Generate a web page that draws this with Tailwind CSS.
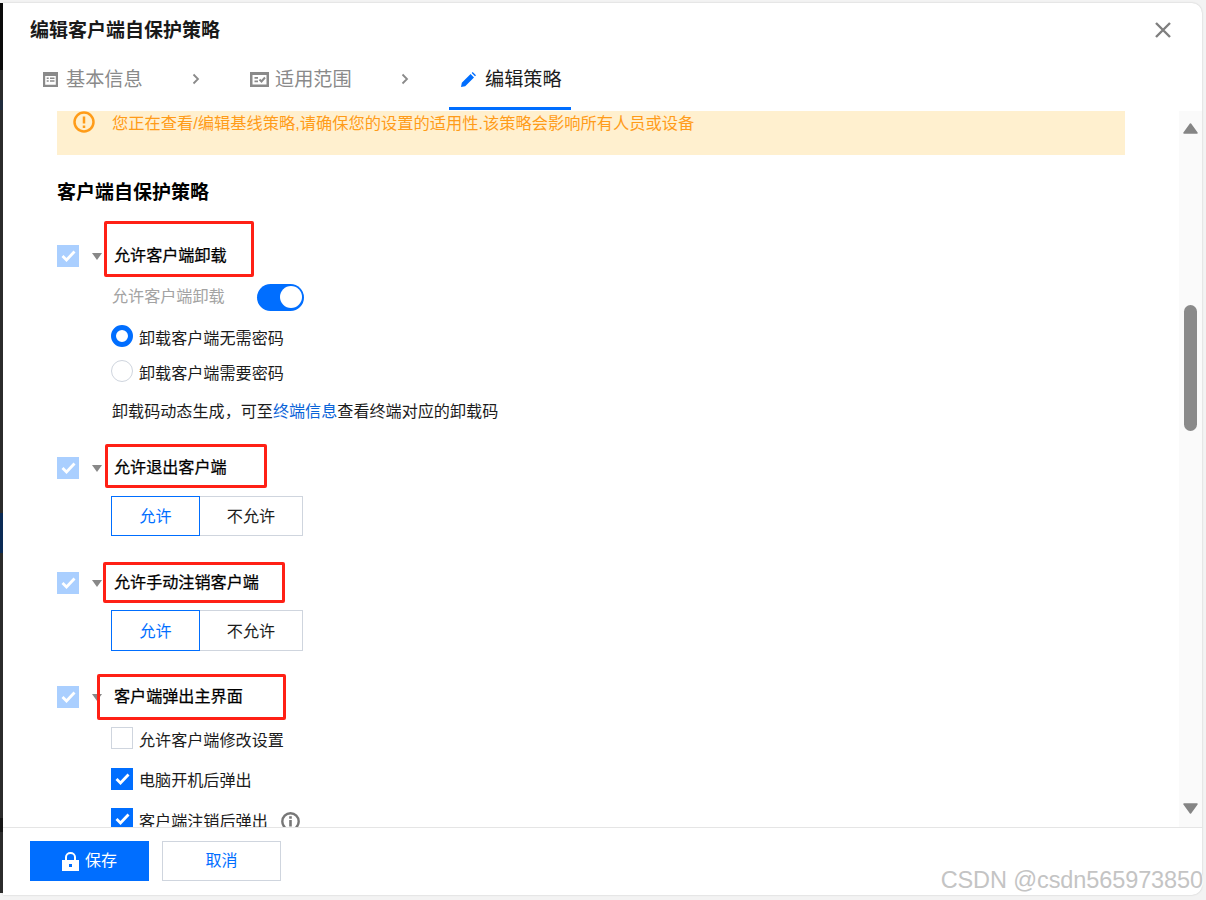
<!DOCTYPE html>
<html>
  <head>
    <meta charset="UTF-8" />
    <script src="https://cdn.jsdelivr.net/npm/@tailwindcss/browser@4"></script>
    <title>编辑客户端自保护策略</title>
  </head>
  <body class="[font-family:'Liberation_Sans','Noto_Sans_CJK_SC',sans-serif]">
    <div class="relative w-[1206px] h-[900px] overflow-hidden bg-[#f3f3f3] pt-[3px] pl-[3px]">
      <!-- dark window behind the dialog, only its edge shows -->
      <div class="absolute left-0 top-[3px] h-[890px] w-[3px] flex flex-col bg-[#2b2b2b]">
        <div class="h-[67px] bg-[#0a0a0a]"></div>
        <div class="mt-[30px] h-[10px] bg-[#1f2c3d]"></div>
        <div class="mt-[403px] h-[40px] bg-[#0a2a55]"></div>
        <div class="mt-[265px] h-[14px] bg-[#161616]"></div>
      </div>

      <section class="w-[1199px] h-[892px] flex flex-col bg-white rounded-r-[10px] shadow-[0_0_2px_rgba(0,0,0,0.2)]">
        <!-- header -->
        <header class="h-[108px] shrink-0">
          <div class="pt-[13px] pl-[27px] pr-[31px] flex items-center justify-between">
            <h1 class="h-[30px] leading-[30px] text-[19px] font-bold text-[#1a1a1a]">编辑客户端自保护策略</h1>
            <svg class="w-[16px] h-[16px] -mt-[2px]" viewBox="0 0 16 16" fill="none" stroke="#7f7f7f" stroke-width="2.400"><path d="M1 1l14 14M15 1L1 15" /></svg>
          </div>
          <nav class="mt-[2px] h-[62px] pl-[40px] flex items-center text-[19.2px] text-[#8a8a8a]">
            <svg class="w-[15px] h-[15px] mr-[8px]" viewBox="0 0 15 15"><path fill="#8a8a8a" fill-rule="evenodd" d="M0 0h15v15H0zM2.200 4v8.800h10.600V4zM3.700 5.500h2v1.600h-2zM7 5.500h4.500v1.600H7zM3.700 8.200h2v1.600h-2zM7 8.200h4.500v1.600H7z" /></svg>
            <span class="w-[77px] pt-[2px] whitespace-nowrap">基本信息</span>
            <svg class="ml-[49px] w-[8px] h-[12px]" viewBox="0 0 8 12" fill="none" stroke="#8a8a8a" stroke-width="1.800"><path d="M1.500 1.500L6 6l-4.500 4.500" /></svg>
            <svg class="ml-[50px] w-[19px] h-[15px] mr-[6px]" viewBox="0 0 19 15"><path fill="#8a8a8a" fill-rule="evenodd" d="M0 0h19v15H0zM2.500 3v9.500h14V3zM4.500 5h3.500v1.800H4.500zM4.500 8.500h3.500v1.800H4.500z" /><path fill="none" stroke="#8a8a8a" stroke-width="2" d="M9.500 7.500l2 2 3.500-4" /></svg>
            <span class="w-[77px] pt-[2px] whitespace-nowrap">适用范围</span>
            <svg class="ml-[49px] w-[8px] h-[12px]" viewBox="0 0 8 12" fill="none" stroke="#8a8a8a" stroke-width="1.800"><path d="M1.500 1.500L6 6l-4.500 4.500" /></svg>
            <div class="ml-[40px] w-[122px] h-full pl-[12px] flex items-center text-[#1c1c1c] shadow-[inset_0_-3px_0_#006eff]">
              <svg class="w-[15px] h-[15px] mr-[9px]" viewBox="0 0 15 15"><path fill="#006eff" d="M0 15l.8-4.200L9.600 2l3.400 3.400L4.200 14.200zM10.700.9l1-.9 3.300 3.300-1 1z" /></svg>
              <span class="pt-[2px] whitespace-nowrap">编辑策略</span>
            </div>
          </nav>
        </header>

        <div class="flex-1 min-h-0 flex">
          <!-- scroll content -->
          <main class="flex-1 min-w-0 overflow-hidden pl-[54px] text-[16.1px] text-[#1c1c1c]">
            <div class="w-[1068px] h-[44px] bg-[#fff0cf] flex items-start pl-[16px] text-[#ff9c19]">
              <svg class="w-[22px] h-[22px] mr-[17px] shrink-0" viewBox="0 0 22 22" fill="none" stroke="#ff9c19"><circle cx="11" cy="11" r="9.500" stroke-width="2.500" /><path stroke-width="2.500" d="M11 5.500v7M11 14.500v2.500" /></svg>
              <span class="text-[16.25px] leading-[24px] whitespace-nowrap">您正在查看/编辑基线策略,请确保您的设置的适用性.该策略会影响所有人员或设备</span>
            </div>

            <h2 class="mt-[23px] h-[30px] leading-[30px] text-[19px] font-bold text-black">客户端自保护策略</h2>

            <!-- 允许客户端卸载 -->
            <div class="mt-[33px] h-[30px] flex items-center">
              <span class="w-[22px] h-[22px] bg-[#aacfff] flex items-center justify-center"><svg class="w-[15px] h-[12px]" viewBox="0 0 15 12" fill="none" stroke="#fff" stroke-width="2.800"><path d="M1.500 6l4 4 8-8.500" /></svg></span>
              <span class="ml-[13px] w-0 h-0 border-x-[5.5px] border-x-transparent border-t-[7px] border-t-[#888]"></span>
              <span class="ml-[11px] pl-[1px] -mt-[2px] text-black [-webkit-text-stroke:0.25px_black]">允许客户端卸载</span>
            </div>
            <div class="mt-[12px] h-[28px] pl-[55px] flex items-center">
              <span class="w-[113px] -mt-[2px] text-[#a3a3a3] whitespace-nowrap">允许客户端卸载</span>
              <span class="ml-[32px] w-[47px] h-[27px] rounded-full bg-[#006eff] flex items-center justify-end pr-[2px]"><span class="w-[22px] h-[22px] rounded-full bg-white"></span></span>
            </div>
            <div class="mt-[11px] h-[30px] pl-[54px] flex items-center">
              <span class="w-[22px] h-[22px] -mt-[2px] rounded-full border-[5px] border-[#006eff] bg-white"></span>
              <span class="ml-[6px] pt-[2px]">卸载客户端无需密码</span>
            </div>
            <div class="mt-[5px] h-[30px] pl-[54px] flex items-center">
              <span class="w-[22px] h-[22px] -mt-[2px] rounded-full border border-[#cfd5de] bg-white"></span>
              <span class="ml-[6px] pt-[2px]">卸载客户端需要密码</span>
            </div>
            <p class="mt-[10px] h-[29px] leading-[29px] pl-[55px] whitespace-nowrap">卸载码动态生成，可至<span class="text-[#0a64d8]">终端信息</span>查看终端对应的卸载码</p>

            <!-- 允许退出客户端 -->
            <div class="mt-[27px] h-[30px] flex items-center">
              <span class="w-[22px] h-[22px] bg-[#aacfff] flex items-center justify-center"><svg class="w-[15px] h-[12px]" viewBox="0 0 15 12" fill="none" stroke="#fff" stroke-width="2.800"><path d="M1.500 6l4 4 8-8.500" /></svg></span>
              <span class="ml-[13px] w-0 h-0 border-x-[5.5px] border-x-transparent border-t-[7px] border-t-[#888]"></span>
              <span class="ml-[11px] pl-[1px] -mt-[2px] text-black [-webkit-text-stroke:0.25px_black]">允许退出客户端</span>
            </div>
            <div class="mt-[13px] ml-[54px] flex h-[40px]">
              <span class="w-[89px] pt-[1px] border border-[#006eff] text-[#006eff] flex items-center justify-center">允许</span>
              <span class="w-[103px] pt-[1px] border border-l-0 border-[#cfd5de] flex items-center justify-center">不允许</span>
            </div>

            <!-- 允许手动注销客户端 -->
            <div class="mt-[32px] h-[30px] flex items-center">
              <span class="w-[22px] h-[22px] bg-[#aacfff] flex items-center justify-center"><svg class="w-[15px] h-[12px]" viewBox="0 0 15 12" fill="none" stroke="#fff" stroke-width="2.800"><path d="M1.500 6l4 4 8-8.500" /></svg></span>
              <span class="ml-[13px] w-0 h-0 border-x-[5.5px] border-x-transparent border-t-[7px] border-t-[#888]"></span>
              <span class="ml-[11px] pl-[1px] -mt-[2px] text-black [-webkit-text-stroke:0.25px_black]">允许手动注销客户端</span>
            </div>
            <div class="mt-[12px] ml-[54px] flex h-[41px]">
              <span class="w-[89px] pt-[1px] border border-[#006eff] text-[#006eff] flex items-center justify-center">允许</span>
              <span class="w-[103px] pt-[1px] border border-l-0 border-[#cfd5de] flex items-center justify-center">不允许</span>
            </div>

            <!-- 客户端弹出主界面 -->
            <div class="mt-[31px] h-[30px] flex items-center">
              <span class="w-[22px] h-[22px] bg-[#aacfff] flex items-center justify-center"><svg class="w-[15px] h-[12px]" viewBox="0 0 15 12" fill="none" stroke="#fff" stroke-width="2.800"><path d="M1.500 6l4 4 8-8.500" /></svg></span>
              <span class="ml-[13px] w-0 h-0 border-x-[5.5px] border-x-transparent border-t-[7px] border-t-[#888]"></span>
              <span class="ml-[11px] pl-[1px] -mt-[2px] text-black [-webkit-text-stroke:0.25px_black]">客户端弹出主界面</span>
            </div>
            <div class="mt-[15px] h-[22px] pl-[54px] flex items-center">
              <span class="w-[22px] h-[22px] border border-[#cfd5de] bg-white"></span>
              <span class="ml-[6px] pt-[4px] whitespace-nowrap">允许客户端修改设置</span>
            </div>
            <div class="mt-[19px] h-[22px] pl-[54px] flex items-center">
              <span class="w-[22px] h-[22px] bg-[#006eff] flex items-center justify-center"><svg class="w-[15px] h-[12px]" viewBox="0 0 15 12" fill="none" stroke="#fff" stroke-width="2.800"><path d="M1.500 6l4 4 8-8.500" /></svg></span>
              <span class="ml-[6px] pt-[2px] whitespace-nowrap">电脑开机后弹出</span>
            </div>
            <div class="mt-[18px] h-[22px] pl-[54px] flex items-center">
              <span class="w-[22px] h-[22px] bg-[#006eff] flex items-center justify-center"><svg class="w-[15px] h-[12px]" viewBox="0 0 15 12" fill="none" stroke="#fff" stroke-width="2.800"><path d="M1.500 6l4 4 8-8.500" /></svg></span>
              <span class="ml-[6px] pt-[4px] whitespace-nowrap">客户端注销后弹出</span>
              <svg class="ml-[13px] mt-[4px] w-[19px] h-[19px]" viewBox="0 0 19 19" fill="none" stroke="#777"><circle cx="9.500" cy="9.500" r="8.200" stroke-width="2.400" /><path stroke-width="2.600" d="M9.500 4.300v2.400M9.500 8v6.500" /></svg>
            </div>
          </main>

          <!-- scrollbar -->
          <aside class="w-[23px] shrink-0 bg-[#fafafa] flex flex-col items-center">
            <svg class="mt-[12px] w-[15px] h-[11px]" viewBox="0 0 15 11"><path fill="#858585" stroke="#858585" stroke-width="1.500" stroke-linejoin="round" d="M7.500 1L1 10h13z" /></svg>
            <span class="mt-[171px] w-[13px] h-[126px] rounded-full bg-[#8a8a8a]"></span>
            <svg class="mt-[372px] w-[15px] h-[11px]" viewBox="0 0 15 11"><path fill="#858585" stroke="#858585" stroke-width="1.500" stroke-linejoin="round" d="M7.500 10L1 1h13z" /></svg>
          </aside>
        </div>

        <!-- footer -->
        <footer class="h-[68px] shrink-0 border-t border-[#e5e5e5] pt-[13px] pl-[27px] flex items-start gap-[13px] text-[16px]">
          <button class="w-[119px] h-[40px] bg-[#006eff] text-white flex items-center justify-center gap-[6px]">
            <svg class="w-[17px] h-[19px]" viewBox="0 0 17 19"><path fill="#fff" fill-rule="evenodd" d="M0 8h17v11H0zM7 12v3h3v-3z" /><path fill="none" stroke="#fff" stroke-width="2" d="M4 8V5a4.500 4 0 0 1 9 0v3" /></svg>
            保存
          </button>
          <button class="w-[119px] h-[40px] border border-[#cfd5de] text-[#006eff] flex items-center justify-center">取消</button>
        </footer>
      </section>

      <!-- red annotation boxes drawn over the screenshot -->
      <div class="absolute left-[104px] top-[221px] w-[150px] h-[56px] border-[3px] border-[#ff2015] rounded-[2px]"></div>
      <div class="absolute left-[105px] top-[444px] w-[162px] h-[44px] border-[3px] border-[#ff2015] rounded-[2px]"></div>
      <div class="absolute left-[103px] top-[562px] w-[182px] h-[41px] border-[3px] border-[#ff2015] rounded-[2px]"></div>
      <div class="absolute left-[97px] top-[674px] w-[189px] h-[46px] border-[3px] border-[#ff2015] rounded-[2px]"></div>

      <!-- watermark -->
      <div class="absolute right-[3px] top-[865px] text-[23.5px] leading-[30px] tracking-[-0.1px] text-[#c4c4c4] [text-shadow:1px_1px_0_#fff] whitespace-nowrap">CSDN @csdn565973850</div>
    </div>
  </body>
</html>
